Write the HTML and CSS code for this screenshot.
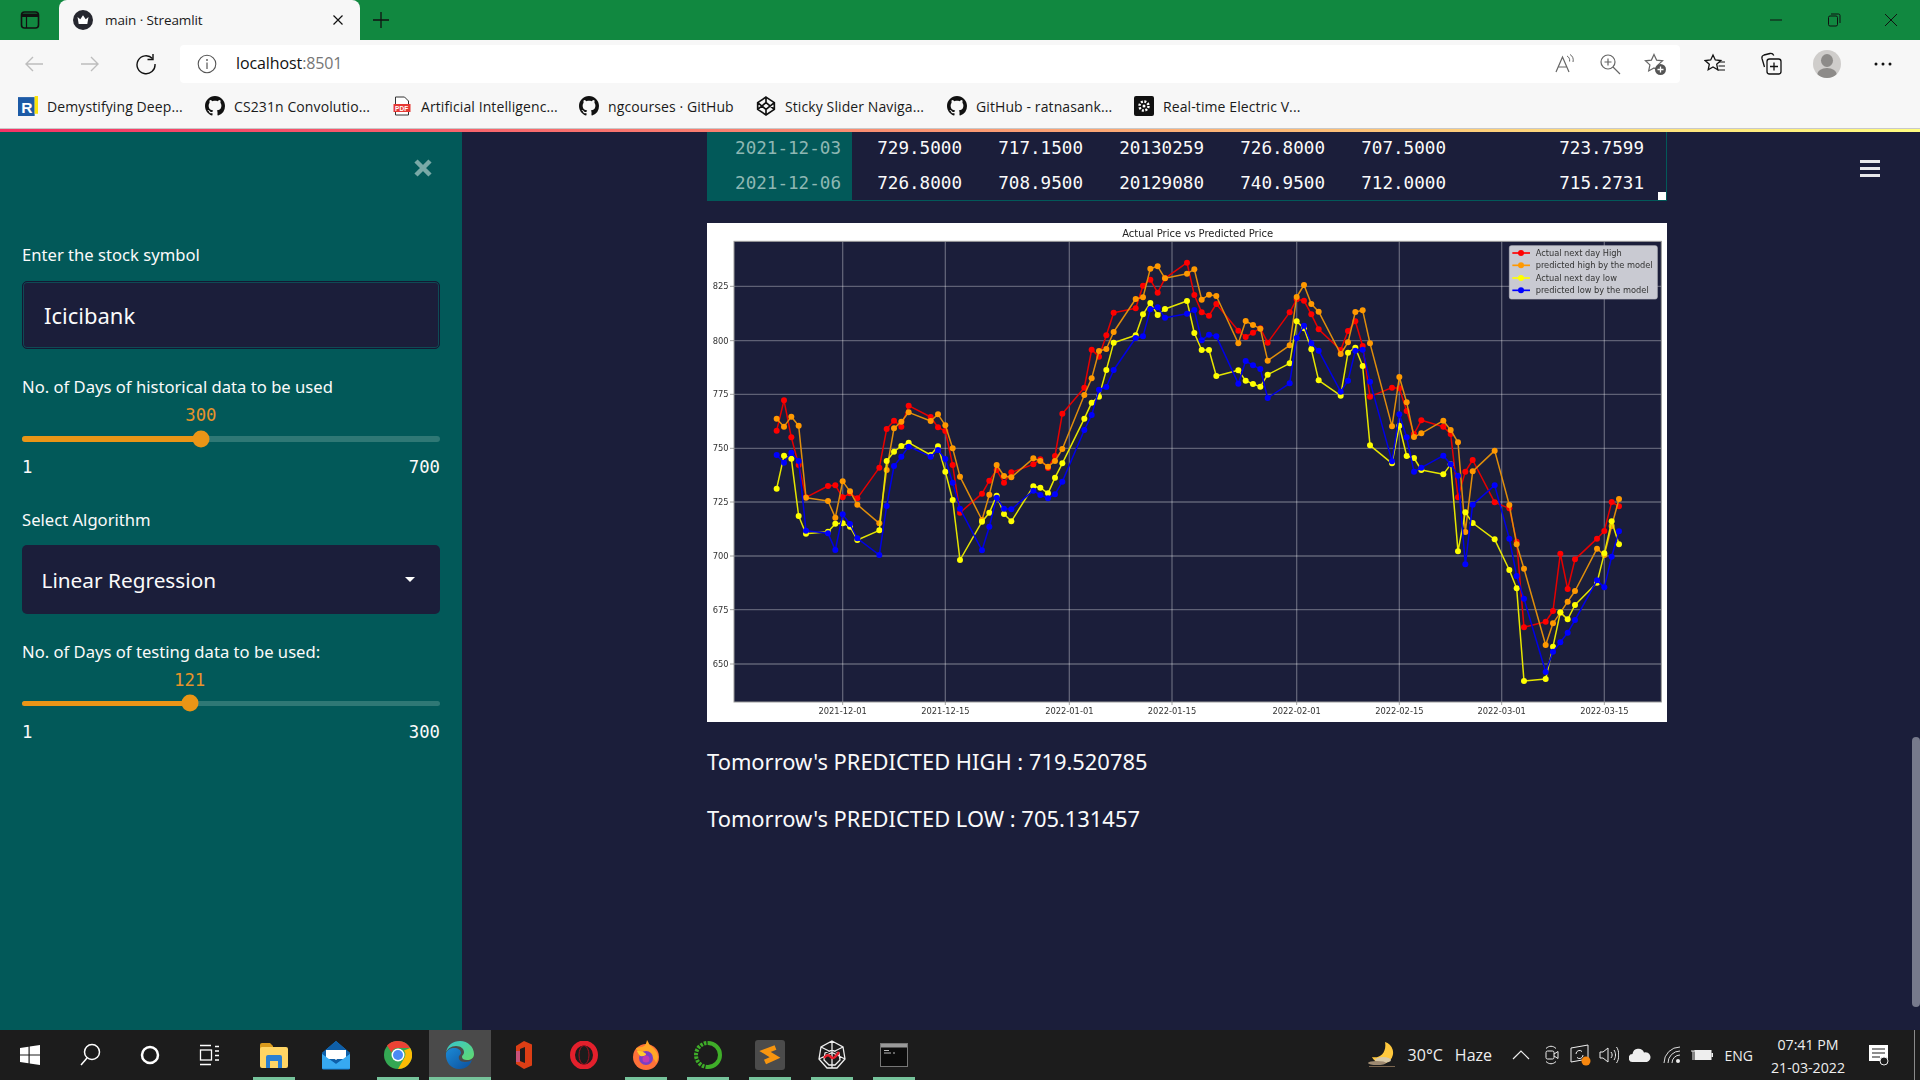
FILE: index.html
```html
<!DOCTYPE html>
<html lang="en">
<head>
<meta charset="utf-8">
<title>main · Streamlit</title>
<link rel="stylesheet" href="styles.css">
</head>
<body>
<svg class="defs" width="0" height="0" aria-hidden="true">
  <symbol id="gh" viewBox="0 0 16 16"><path fill="#111" d="M8 0C3.58 0 0 3.58 0 8c0 3.54 2.29 6.53 5.47 7.59.4.07.55-.17.55-.38 0-.19-.01-.82-.01-1.49-2.01.37-2.53-.49-2.69-.94-.09-.23-.48-.94-.82-1.13-.28-.15-.68-.52-.01-.53.63-.01 1.08.58 1.23.82.72 1.21 1.87.87 2.33.66.07-.52.28-.87.51-1.07-1.78-.2-3.64-.89-3.64-3.95 0-.87.31-1.59.82-2.15-.08-.2-.36-1.02.08-2.12 0 0 .67-.21 2.2.82.64-.18 1.32-.27 2-.27.68 0 1.36.09 2 .27 1.53-1.04 2.2-.82 2.2-.82.44 1.1.16 1.92.08 2.12.51.56.82 1.27.82 2.15 0 3.07-1.87 3.75-3.65 3.95.29.25.54.73.54 1.48 0 1.07-.01 1.93-.01 2.2 0 .21.15.46.55.38A8.013 8.013 0 0016 8c0-4.42-3.58-8-8-8z"/></symbol>
</svg>
<div class="window">
  <header class="titlebar">
    <div class="tabstrip-btn">
      <svg width="20" height="20" viewBox="0 0 20 20"><rect x="1.5" y="2" width="17" height="16" rx="3" fill="none" stroke="#111" stroke-width="1.6"/><path d="M2 3.5h16V7H2z" fill="#111"/><path d="M6.5 7v11" stroke="#111" stroke-width="1.2"/></svg>
    </div>
    <div class="tab">
      <svg class="favicon" width="20" height="20" viewBox="0 0 20 20"><circle cx="10" cy="10" r="10" fill="#26272f"/><path d="M4.5 7l2.8 2.2L10 5.2l2.7 4L15.5 7l-1.2 7H5.700z" fill="#fff"/></svg>
      <span class="tab-title">main · Streamlit</span>
      <svg class="tab-close" width="12" height="12" viewBox="0 0 12 12"><path d="M1.500 1.500l9 9M10.500 1.500l-9 9" stroke="#111" stroke-width="1.200"/></svg>
    </div>
    <div class="newtab"><svg width="18" height="18" viewBox="0 0 18 18"><path d="M9 1v16M1 9h16" stroke="#111" stroke-width="1.300"/></svg></div>
    <div class="winctrls">
      <div class="winctrl"><svg width="14" height="14" viewBox="0 0 14 14"><path d="M1 7h12" stroke="#111" stroke-width="1"/></svg></div>
      <div class="winctrl"><svg width="14" height="14" viewBox="0 0 14 14"><rect x="1.500" y="3" width="9" height="10" rx="1.500" fill="none" stroke="#111"/><path d="M4 1h7.500A1.500 1.500 0 0 1 13 2.500V10" fill="none" stroke="#111"/></svg></div>
      <div class="winctrl"><svg width="14" height="14" viewBox="0 0 14 14"><path d="M1 1l12 12M13 1L1 13" stroke="#111" stroke-width="1"/></svg></div>
    </div>
  </header>

  <div class="toolbar">
    <div class="tool"><svg width="22" height="22" viewBox="0 0 22 22"><path d="M20 11H3M10 4l-7 7 7 7" fill="none" stroke="#bdbdbd" stroke-width="1.400"/></svg></div>
    <div class="tool"><svg width="22" height="22" viewBox="0 0 22 22"><path d="M2 11h17M12 4l7 7-7 7" fill="none" stroke="#bdbdbd" stroke-width="1.400"/></svg></div>
    <div class="tool"><svg width="22" height="22" viewBox="0 0 22 22"><path d="M17.500 5.500A9 9 0 1 0 20 11" fill="none" stroke="#111" stroke-width="1.400"/><path d="M18 1v5.500h-5.500" fill="none" stroke="#111" stroke-width="1.400"/></svg></div>
    <div class="address">
      <svg class="info" width="20" height="20" viewBox="0 0 20 20"><circle cx="10" cy="10" r="8.800" fill="none" stroke="#555" stroke-width="1.100"/><path d="M10 8.500V15" stroke="#555" stroke-width="1.200"/><circle cx="10" cy="6" r=".9" fill="#555"/></svg>
      <span class="url">localhost<span class="port">:8501</span></span>
      <div class="addr-icons">
        <svg width="22" height="22" viewBox="0 0 22 22"><path d="M2 19L8.500 4 15 19M4.500 14h8" fill="none" stroke="#666" stroke-width="1.200"/><path d="M13 3c2 1 3 3 2.600 5.500M16 1.500c2.800 1.500 3.800 4.500 3 7.500" fill="none" stroke="#666" stroke-width="1"/></svg>
        <svg width="22" height="22" viewBox="0 0 22 22"><circle cx="9" cy="9" r="7" fill="none" stroke="#666" stroke-width="1.200"/><path d="M14 14l7 7M9 5.500v7M5.500 9h7" fill="none" stroke="#666" stroke-width="1.200"/></svg>
        <svg width="22" height="22" viewBox="0 0 22 22"><path d="M10 1.500l2.600 5.600 6 .7-4.500 4.100 1.200 6-5.300-3-5.300 3 1.200-6L1.400 7.800l6-.7z" fill="none" stroke="#666" stroke-width="1.200"/><circle cx="16.500" cy="16.500" r="5.500" fill="#555"/><path d="M16.500 13.500v6M13.500 16.500h6" stroke="#fff" stroke-width="1.300"/></svg>
      </div>
    </div>
    <div class="tool tool-first"><svg width="22" height="22" viewBox="0 0 22 22"><path d="M9 2l2.300 5 5.500.6-4.100 3.700 1.100 5.400L9 14l-4.800 2.700 1.100-5.400L1.200 7.600 6.700 7z" fill="none" stroke="#111" stroke-width="1.300"/><path d="M15 9h6M14.500 13h6.500M13.500 17H21" stroke="#111" stroke-width="1.200"/></svg></div>
    <div class="tool"><svg width="22" height="24" viewBox="0 0 22 24"><rect x="7" y="7" width="14" height="15" rx="2.500" fill="none" stroke="#111" stroke-width="1.300"/><path d="M14 10.500v8M10 14.500h8" stroke="#111" stroke-width="1.300"/><path d="M4.500 15L2 6.500A3 3 0 0 1 4 3l6-1.500c1.800-.4 3 .3 3.800 2" fill="none" stroke="#111" stroke-width="1.300"/></svg></div>
    <div class="tool"><svg width="28" height="28" viewBox="0 0 28 28"><defs><clipPath id="pc"><circle cx="14" cy="14" r="14"/></clipPath></defs><circle cx="14" cy="14" r="14" fill="#cfcdcb"/><g clip-path="url(#pc)" fill="#8d8b89"><ellipse cx="14" cy="10.500" rx="6" ry="6.500"/><ellipse cx="14" cy="25" rx="10" ry="7"/></g></svg></div>
    <div class="tool"><svg width="18" height="4" viewBox="0 0 18 4"><circle cx="2" cy="2" r="1.500" fill="#111"/><circle cx="9" cy="2" r="1.500" fill="#111"/><circle cx="16" cy="2" r="1.500" fill="#111"/></svg></div>
  </div>

  <nav class="bookmarks">
    <div class="bm">
      <svg width="20" height="20" viewBox="0 0 18 18"><rect y="1" width="15" height="17" fill="#1c5aa6"/><rect x="15" width="3" height="16" fill="#fbe30a"/><text x="3" y="15" class="bm-r">R</text></svg>
      <span>Demystifying Deep...</span>
    </div>
    <div class="bm"><svg width="20" height="20"><use href="#gh"/></svg><span>CS231n Convolutio...</span></div>
    <div class="bm">
      <svg width="20" height="20" viewBox="0 0 20 20"><path d="M3.500 1h9l4 4v14h-13z" fill="#fff" stroke="#333"/><rect x="1.500" y="8" width="17" height="8" fill="#e53935"/><text x="3" y="14.500" class="bm-pdf">PDF</text></svg>
      <span>Artificial Intelligenc...</span>
    </div>
    <div class="bm bm-short"><svg width="20" height="20"><use href="#gh"/></svg><span>ngcourses · GitHub</span></div>
    <div class="bm bm-wide">
      <svg width="20" height="20" viewBox="0 0 18 18"><path d="M9 1l7.500 5v6L9 17l-7.500-5V6zM9 1v5M9 12v5M1.500 6L9 12l7.500-6M1.500 12L9 6l7.500 6" fill="none" stroke="#111" stroke-width="1.500"/></svg>
      <span>Sticky Slider Naviga...</span>
    </div>
    <div class="bm"><svg width="20" height="20"><use href="#gh"/></svg><span>GitHub - ratnasank...</span></div>
    <div class="bm">
      <svg width="20" height="20" viewBox="0 0 20 20"><rect width="20" height="20" rx="2" fill="#111"/><circle cx="10" cy="10" r="4.500" fill="none" stroke="#fff" stroke-width="2.500" stroke-dasharray="2 1.500"/><circle cx="10" cy="10" r="1.500" fill="#fff"/></svg>
      <span>Real-time Electric V...</span>
    </div>
  </nav>

  <div class="app">
    <div class="decoration"></div>
    <div class="app-body">
      <aside class="sidebar">
        <div class="close-row">
          <svg width="18" height="18" viewBox="0 0 18 18"><path d="M2 2l14 14M16 2L2 16" stroke="#7aa9a7" stroke-width="4.500"/></svg>
        </div>
        <div class="label">Enter the stock symbol</div>
        <div class="text-input">Icicibank</div>
        <div class="label label-next">No. of Days of historical data to be used</div>
        <div class="slider" style="--p:42.8%">
          <div class="slider-value">300</div>
          <div class="track-wrap">
            <div class="track"><div class="fill"></div></div>
            <div class="thumb"></div>
          </div>
          <div class="ticks"><span>1</span><span>700</span></div>
        </div>
        <div class="label label-select">Select Algorithm</div>
        <div class="select"><span>Linear Regression</span><i class="caret"></i></div>
        <div class="label label-next">No. of Days of testing data to be used:</div>
        <div class="slider slider-b" style="--p:40.1%">
          <div class="slider-value">121</div>
          <div class="track-wrap">
            <div class="track"><div class="fill"></div></div>
            <div class="thumb"></div>
          </div>
          <div class="ticks"><span>1</span><span>300</span></div>
        </div>
      </aside>

      <main class="main">
        <div class="hamburger"><i></i><i></i><i></i></div>
        <div class="scrollbar"></div>
        <section class="content">
          <div class="dataframe">
            <div class="df-grid">
              <div class="df-index">2021-12-03</div><div>729.5000</div><div>717.1500</div><div>20130259</div><div>726.8000</div><div>707.5000</div><div>723.7599</div>
              <div class="df-index">2021-12-06</div><div>726.8000</div><div>708.9500</div><div>20129080</div><div>740.9500</div><div>712.0000</div><div>715.2731</div>
            </div>
            <div class="df-corner"></div>
          </div>

          <svg class="chart" width="960" height="499" viewBox="21 279 2880 1497">
            <defs>
              <marker id="mr" viewBox="-10 -10 20 20" markerWidth="20" markerHeight="20" markerUnits="userSpaceOnUse"><circle r="9" fill="#ff0000"/></marker>
              <marker id="mo" viewBox="-10 -10 20 20" markerWidth="20" markerHeight="20" markerUnits="userSpaceOnUse"><circle r="9" fill="#ff9900"/></marker>
              <marker id="my" viewBox="-10 -10 20 20" markerWidth="20" markerHeight="20" markerUnits="userSpaceOnUse"><circle r="9" fill="#ffff00"/></marker>
              <marker id="mb" viewBox="-10 -10 20 20" markerWidth="20" markerHeight="20" markerUnits="userSpaceOnUse"><circle r="9" fill="#0000ff"/></marker>
            </defs>
            <rect x="21" y="279" width="2880" height="1497" fill="#fff"/>
            <rect x="102" y="334" width="2782" height="1382" fill="#1b1e3a"/>
            <g class="grid">
              <path d="M428 334V1716M736 334V1716M1108 334V1716M1416 334V1716M1790 334V1716M2098 334V1716M2405 334V1716M2713 334V1716"/>
              <path d="M102 469H2884M102 632H2884M102 793H2884M102 955H2884M102 1116H2884M102 1278H2884M102 1439H2884M102 1602H2884"/>
            </g>
            <rect class="spine" x="102" y="334" width="2782" height="1382"/>
            <path class="tickmarks" d="M90 469h12M90 632h12M90 793h12M90 955h12M90 1116h12M90 1278h12M90 1439h12M90 1602h12M428 1716v9M736 1716v9M1108 1716v9M1416 1716v9M1790 1716v9M2098 1716v9M2405 1716v9M2713 1716v9"/>
            <polyline class="line" stroke="#e60000" marker-start="url(#mr)" marker-mid="url(#mr)" marker-end="url(#mr)" points="230,902 252,811 274,922 296,1005 318,1102 384,1068 406,1066 428,1102 450,1090 472,1105 538,1013 560,897 582,872 604,890 626,827 692,861 714,892 736,903 758,1005 780,1148 846,1091 868,1052 890,1020 912,1058 934,1027 1000,1003 1021,988 1044,1014 1065,978 1087,851 1153,773 1175,659 1197,680 1219,616 1241,548 1307,535 1329,467 1351,449 1373,488 1395,445 1461,398 1483,495 1505,547 1527,557 1549,522 1615,602 1637,621 1659,608 1681,595 1703,638 1769,547 1790,508 1812,512 1834,553 1856,598 1922,660 1944,603 1966,574 1988,648 2010,800 2076,773 2098,775 2120,843 2142,912 2164,871 2230,890 2252,912 2274,1102 2296,1025 2318,990 2384,1117 2428,1135 2450,1235 2472,1492 2537,1475 2559,1443 2581,1271 2603,1377 2625,1288 2691,1226 2713,1203 2735,1116 2757,1129"/>
            <polyline class="line" stroke="#e08e0b" marker-start="url(#mo)" marker-mid="url(#mo)" marker-end="url(#mo)" points="230,866 252,890 274,860 296,887 318,1103 384,1113 406,1163 428,1054 450,1084 472,1124 538,1180 560,1020 582,895 604,875 626,847 692,873 714,853 736,886 758,955 780,1040 846,1170 868,1094 890,1005 912,1038 934,1042 1000,985 1021,993 1044,1010 1065,993 1087,957 1153,795 1175,745 1197,663 1219,657 1241,606 1307,507 1329,502 1351,416 1373,409 1395,445 1461,431 1483,418 1505,509 1527,494 1549,498 1615,640 1637,573 1659,585 1681,596 1703,692 1769,646 1790,501 1812,465 1834,522 1856,545 1922,672 1944,637 1966,546 1988,541 2010,640 2076,889 2098,741 2120,817 2142,921 2164,910 2230,872 2252,900 2274,937 2296,1206 2318,1024 2384,962 2428,1125 2450,1243 2472,1316 2537,1545 2559,1480 2581,1448 2603,1415 2625,1383 2691,1256 2713,1275 2735,1188 2757,1107"/>
            <polyline class="line" stroke="#e6e600" marker-start="url(#my)" marker-mid="url(#my)" marker-end="url(#my)" points="230,1076 252,977 274,986 296,1158 318,1211 384,1205 406,1181 428,1180 450,1190 472,1230 538,1201 560,993 582,965 604,948 626,938 692,975 714,949 736,1025 758,1110 780,1290 846,1175 868,1148 890,1097 912,1152 934,1174 1000,1069 1021,1073 1044,1090 1065,1043 1087,1000 1153,866 1175,818 1197,800 1219,720 1241,638 1307,616 1329,553 1351,519 1373,555 1395,537 1461,513 1483,609 1505,660 1527,660 1549,738 1615,721 1637,752 1659,762 1681,770 1703,734 1769,700 1790,574 1812,595 1834,658 1856,751 1922,797 1944,668 1966,653 1988,708 2010,946 2076,1000 2098,887 2120,978 2142,984 2164,1020 2230,1033 2252,1003 2274,1264 2296,1147 2318,1179 2384,1228 2428,1320 2450,1375 2472,1653 2537,1647 2559,1550 2581,1447 2603,1468 2625,1425 2691,1358 2713,1270 2735,1174 2757,1243"/>
            <polyline class="line" stroke="#0000e6" marker-start="url(#mb)" marker-mid="url(#mb)" marker-end="url(#mb)" points="230,975 252,998 274,968 296,993 318,1202 384,1210 406,1260 428,1153 450,1182 472,1225 538,1275 560,1128 582,1008 604,980 626,950 692,980 714,960 736,987 758,1058 780,1136 846,1261 868,1190 890,1103 912,1136 934,1138 1000,1082 1021,1095 1044,1105 1065,1093 1087,1055 1153,900 1175,855 1197,779 1219,771 1241,720 1307,624 1329,619 1351,538 1373,532 1395,563 1461,551 1483,540 1505,631 1527,614 1549,619 1615,761 1637,693 1659,706 1681,717 1703,804 1769,760 1790,624 1812,587 1834,640 1856,662 1922,785 1944,752 1966,662 1988,659 2010,755 2076,994 2098,853 2120,922 2142,1025 2164,1013 2230,977 2252,1003 2274,1037 2296,1303 2318,1124 2384,1066 2428,1226 2450,1338 2472,1406 2537,1626 2559,1565 2581,1537 2603,1508 2625,1470 2691,1351 2713,1372 2735,1280 2757,1204"/>
            <text class="title" x="1493" y="320" text-anchor="middle">Actual Price vs Predicted Price</text>
            <g class="ytick" text-anchor="end">
              <text x="86" y="478">825</text><text x="86" y="641">800</text><text x="86" y="802">775</text><text x="86" y="964">750</text><text x="86" y="1125">725</text><text x="86" y="1287">700</text><text x="86" y="1448">675</text><text x="86" y="1611">650</text>
            </g>
            <g class="ytick" text-anchor="middle">
              <text x="428" y="1752">2021-12-01</text><text x="736" y="1752">2021-12-15</text><text x="1108" y="1752">2022-01-01</text><text x="1416" y="1752">2022-01-15</text><text x="1790" y="1752">2022-02-01</text><text x="2098" y="1752">2022-02-15</text><text x="2405" y="1752">2022-03-01</text><text x="2713" y="1752">2022-03-15</text>
            </g>
            <rect class="legend" x="2428" y="347" width="444" height="160" rx="6"/>
            <path class="leg-line" stroke="#f00" d="M2437 369h53"/><circle cx="2463" cy="369" r="9" fill="#f00"/>
            <path class="leg-line" stroke="#f90" d="M2437 406h53"/><circle cx="2463" cy="406" r="9" fill="#f90"/>
            <path class="leg-line" stroke="#ff0" d="M2437 444h53"/><circle cx="2463" cy="444" r="9" fill="#ff0"/>
            <path class="leg-line" stroke="#00f" d="M2437 481h53"/><circle cx="2463" cy="481" r="9" fill="#00f"/>
            <g class="legtext">
              <text x="2507" y="377">Actual next day High</text>
              <text x="2507" y="415">predicted high by the model</text>
              <text x="2507" y="452">Actual next day low</text>
              <text x="2507" y="490">predicted low by the model</text>
            </g>
          </svg>

          <p class="prediction prediction-first">Tomorrow's PREDICTED HIGH : 719.520785</p>
          <p class="prediction">Tomorrow's PREDICTED LOW : 705.131457</p>
        </section>
      </main>
    </div>
  </div>

  <footer class="taskbar">
    <div class="tb-left">
      <div class="tb tb-sys"><svg width="22" height="22" viewBox="0 0 22 22"><path d="M1 4l8.500-1.300V10.400H1zM10.700 2.500L21 1v9.400H10.700zM1 11.600h8.500V19.300L1 18zM10.700 11.600H21V21l-10.300-1.500z" fill="#fff"/></svg></div>
      <div class="tb tb-sys"><svg width="22" height="24" viewBox="0 0 22 24"><circle cx="13" cy="9" r="7.500" fill="none" stroke="#fff" stroke-width="1.500"/><path d="M8 15L2 22" stroke="#fff" stroke-width="1.500"/></svg></div>
      <div class="tb tb-sys"><svg width="22" height="22" viewBox="0 0 22 22"><circle cx="11" cy="11" r="8" fill="none" stroke="#fff" stroke-width="2.500"/></svg></div>
      <div class="tb tb-sys"><svg width="22" height="22" viewBox="0 0 22 22"><path d="M1 1.500h11M1 20.500h11M16 2.500h4M16 7h4M16 11.500h4M16 16h4" stroke="#fff" stroke-width="1.300"/><rect x="1.500" y="6" width="11" height="10" fill="none" stroke="#fff" stroke-width="1.300"/></svg></div>
      <div class="tb tb-app tb-first tb-on"><svg width="30" height="28" viewBox="0 0 30 28"><path d="M1 4a2 2 0 0 1 2-2h8l3 3v4H1z" fill="#d99a1c"/><rect x="1" y="6" width="28" height="21" rx="2" fill="#ffd564"/><path d="M7 27V16a2 2 0 0 1 2-2h12a2 2 0 0 1 2 2v11h-4v-7h-8v7z" fill="#2a7fd2"/></svg></div>
      <div class="tb tb-app"><svg width="30" height="30" viewBox="0 0 30 30"><path d="M15 1L29 13v15a1.500 1.500 0 0 1-1.500 1.500h-25A1.500 1.500 0 0 1 1 28V13z" fill="#1888df"/><path d="M15 1L29 13v1L15 24 1 14v-1z" fill="#0f5fa8"/><rect x="5" y="10" width="20" height="9" fill="#fff"/><path d="M5 12l10 8 10-8v-2H5z" fill="#fff"/><path d="M1 14l14 10 14-10v14.500H1z" fill="#37a9f1"/></svg></div>
      <div class="tb tb-app tb-on"><svg width="28" height="28" viewBox="0 0 28 28"><circle cx="14" cy="14" r="14" fill="#34a853"/><path d="M14 0a14 14 0 0 1 12.200 7H14a7 7 0 0 0-6.500 4.400L3 4.500A14 14 0 0 1 14 0z" fill="#ea4335"/><path d="M26.200 7A14 14 0 0 1 14 28l6-10.500A7 7 0 0 0 20 9.500z" fill="#fbbc04"/><circle cx="14" cy="14" r="6.500" fill="#fff"/><circle cx="14" cy="14" r="5" fill="#4a8af4"/></svg></div>
      <div class="tb tb-app tb-active"><svg width="30" height="30" viewBox="0 0 30 30"><defs><linearGradient id="eg1" x1="0" y1="0" x2="1" y2="1"><stop offset="0" stop-color="#37c6d0"/><stop offset="1" stop-color="#62d96b"/></linearGradient><linearGradient id="eg2" x1="0" y1="0" x2="1" y2="1"><stop offset="0" stop-color="#1b8ad6"/><stop offset="1" stop-color="#0c4f9c"/></linearGradient></defs><path d="M1 13C2 5 8 1 15 1c8 0 14 6 14 13 0 4-3 6-7 6-3 0-5-1-5-3 0-2 2-2 2-5 0-3-3-6-8-6-5 0-9 3-10 7z" fill="url(#eg1)"/><path d="M1 13c2-4 5-5 8-5 4 0 7 2 7 5 0 1-1 2-2 3-1 3 1 6 6 6 3 0 5-1 7-2-2 6-7 9-13 9C6 29 0 22 1 13z" fill="url(#eg2)"/></svg></div>
      <div class="tb tb-app"><svg width="24" height="28" viewBox="0 0 24 28"><path d="M6 5l8-5 8 3.500v21L14 28l-8-5z" fill="#dc3e15"/><path d="M10 8l5-2v16l-5-2z" fill="#1c1c1c"/><path d="M6 10h4v11H6z" fill="#c9527a"/></svg></div>
      <div class="tb tb-app"><svg width="28" height="28" viewBox="0 0 28 28"><ellipse cx="14" cy="14" rx="11.500" ry="12" fill="none" stroke="#e3202c" stroke-width="5"/><ellipse cx="14" cy="14" rx="5" ry="9.500" fill="none" stroke="#a50f1e" stroke-width="1"/></svg></div>
      <div class="tb tb-app tb-on"><svg width="28" height="30" viewBox="0 0 28 30"><circle cx="14" cy="17" r="13" fill="#ff7139"/><path d="M4 8c2 0 3-1 5-1 3 0 5-2 6-7 2 3 2 5 4 6 4 3 7 7 7 11 0 2-1 4-2 6-2-6-8-9-13-8-2 0-4 0-7-7z" fill="#ffa726"/><circle cx="14" cy="18" r="7" fill="#7a3fc4"/><path d="M5 11c2 0 5 0 8 2 2 1 1 3-2 3-3 1-4-1-6-5z" fill="#ffcb2d"/><circle cx="14" cy="19" r="3.500" fill="#c13bb1"/></svg></div>
      <div class="tb tb-app tb-on"><svg width="28" height="28" viewBox="0 0 28 28"><path d="M14 2a12 12 0 0 1 0 24" fill="none" stroke="#3fae29" stroke-width="4"/><path d="M14 26A12 12 0 0 1 14 2" fill="none" stroke="#3fae29" stroke-width="4" stroke-dasharray="2.500 1.200"/></svg></div>
      <div class="tb tb-app tb-on"><svg width="30" height="30" viewBox="0 0 30 30"><rect width="30" height="30" rx="3" fill="#4b4b4b"/><path d="M20.500 7.500L10 11.500l10 6-10 4.500" fill="none" stroke="#f7950f" stroke-width="5"/></svg></div>
      <div class="tb tb-app tb-on"><svg width="28" height="30" viewBox="0 0 28 30"><path d="M14 1L25 7l2 12-8 9H9l-8-9 2-12zM14 1v27M3 7l24 12M25 7L1 19M7 13l7-3 7 3 1 7-5 5h-6l-5-5z" fill="none" stroke="#eee" stroke-width="1.300"/><path d="M6 18c3-4 5-3 7-1s4 1 8-5" fill="none" stroke="#e8202c" stroke-width="2.500"/></svg></div>
      <div class="tb tb-app tb-on"><svg width="28" height="24" viewBox="0 0 28 24"><rect x=".5" y=".5" width="27" height="23" fill="#0c0c0c" stroke="#777"/><rect x="1" y="1" width="26" height="3.500" fill="#9a9a9a"/><path d="M4 7.500h5M4 10h7M13 10h2" stroke="#bbb" stroke-width="1"/></svg></div>
    </div>
    <div class="tray">
      <svg class="tray-moon" width="30" height="28" viewBox="0 0 30 28"><path d="M18 1a11 11 0 1 1-13 15c8 2 15-5 13-15z" fill="#ffc83d"/><ellipse cx="16" cy="19" rx="8" ry="3" fill="#d8c9a8"/><ellipse cx="10" cy="22" rx="9" ry="2" fill="#9f8b72"/><path d="M2 25.500h26" stroke="#7a6650" stroke-width="1"/></svg>
      <span class="tray-temp">30°C</span>
      <span class="tray-haze">Haze</span>
      <svg class="tray-caret" width="18" height="10" viewBox="0 0 18 10"><path d="M1 9l8-8 8 8" fill="none" stroke="#eee" stroke-width="1.200"/></svg>
      <svg class="tray-video" width="16" height="20" viewBox="0 0 16 20"><rect x="2" y="6" width="8" height="8" rx="1.500" fill="none" stroke="#eee"/><path d="M10 9l4-2.500v7L10 11M2 3.500c3-3 7-3 10 0M2 16.500c3 3 7 3 10 0" fill="none" stroke="#eee"/></svg>
      <svg class="tray-app" width="22" height="22" viewBox="0 0 22 22"><path d="M1 4l17-3v14l-17 3z" fill="none" stroke="#eee"/><path d="M6 10a3.500 3.500 0 0 1 6-2.500M13 11a3.500 3.500 0 0 1-6 2.500" fill="none" stroke="#eee"/><circle cx="16" cy="17" r="4.500" fill="#f7870f"/></svg>
      <svg class="tray-speaker" width="20" height="20" viewBox="0 0 20 20"><path d="M1 7h3l5-4v14l-5-4H1zM12 7c1.500 2 1.500 4 0 6M15 5c2 3 2 7 0 10M17.500 2c3 4 3 12 0 16" fill="none" stroke="#eee"/></svg>
      <svg class="tray-cloud" width="22" height="14" viewBox="0 0 22 14"><path d="M4 14a4 4 0 0 1-.500-8A6 6 0 0 1 15 4.500a4.500 4.500 0 0 1 3 9.500z" fill="#eee"/></svg>
      <svg class="tray-wifi" width="18" height="18" viewBox="0 0 18 18"><path d="M1 17A16 16 0 0 1 17 1M5 17A12 12 0 0 1 17 5M9 17a8 8 0 0 1 8-8" fill="none" stroke="#ddd"/><circle cx="15" cy="15" r="2" fill="#eee"/></svg>
      <svg class="tray-battery" width="22" height="14" viewBox="0 0 22 14"><rect x="4" y="2.500" width="16" height="9" fill="#eee" stroke="#eee"/><rect x="20.500" y="5" width="1.500" height="4" fill="#eee"/><path d="M2 3v9M0 3h4" stroke="#eee"/></svg>
      <span class="tray-eng">ENG</span>
      <div class="clock"><span>07:41 PM</span><span>21-03-2022</span></div>
      <svg class="tray-notif" width="22" height="22" viewBox="0 0 22 22"><path d="M1 1h19v16H1z" fill="#fff"/><path d="M4 5h13M4 9h13M4 13h8" stroke="#1c1c1c" stroke-width="1.200"/><circle cx="16" cy="17" r="4" fill="#1c1c1c" stroke="#eee"/></svg>
      <i class="desktop-divider"></i>
    </div>
  </footer>
</div>
</body>
</html>
```

FILE: styles.css
```css
* { box-sizing: border-box; }
html, body { margin: 0; height: 100%; overflow: hidden; }
body { font-family: "Noto Sans", "Open Sans", sans-serif; background: #1b1e3a; }
.defs { position: absolute; }
.window { width: 1920px; height: 1080px; display: flex; flex-direction: column; }

/* browser chrome */
.titlebar { height: 40px; flex: none; display: flex; background: #118840; }
.tabstrip-btn { width: 59px; display: flex; align-items: center; justify-content: center; }
.tab { width: 301px; background: #f7f7f7; border-radius: 8px 8px 0 0; display: flex; align-items: center; padding: 0 16px 0 14px; }
.tab-title { margin-left: 12px; font: 13.5px "Open Sans", sans-serif; color: #1a1a1a; letter-spacing: -.1px; }
.tab-close { margin-left: auto; }
.newtab { width: 42px; display: flex; align-items: center; justify-content: center; }
.winctrls { margin-left: auto; display: flex; }
.winctrl { width: 57.6px; display: flex; align-items: center; justify-content: center; }

.toolbar { height: 48px; flex: none; background: #f7f7f7; display: flex; align-items: center; padding-left: 6px; }
.tool { width: 56px; height: 40px; display: flex; align-items: center; justify-content: center; }
.tool-first { margin-left: 7px; }
.address { width: 1500px; height: 38px; margin-left: 6px; background: #fff; border-radius: 4px; display: flex; align-items: center; padding: 0 6px 0 17px; }
.url { margin-left: 19px; font: 16px "Open Sans", sans-serif; color: #111; letter-spacing: -.1px; position: relative; top: -1px; }
.port { color: #767676; }
.addr-icons { margin-left: auto; display: flex; gap: 23px; padding-right: 8px; }

.bookmarks { height: 41px; flex: none; background: #f7f7f7; border-bottom: 1px solid #c9c9c9; display: flex; align-items: center; padding: 0 0 4px 18px; font: 14px "Open Sans", sans-serif; color: #1a1a1a; letter-spacing: .1px; }
.bm { width: 187px; display: flex; align-items: center; gap: 9px; white-space: nowrap; }
.bm-short { width: 177px; }
.bm-wide { width: 191px; }
.bm-r { font: 700 14px "Liberation Sans", sans-serif; fill: #fff; }
.bm-pdf { font: 700 6.500px "Liberation Sans", sans-serif; fill: #fff; }

/* streamlit app */
.app { flex: 1; min-height: 0; display: flex; flex-direction: column; background: #1b1e3a; }
.decoration { height: 3px; flex: none; background: linear-gradient(90deg, #f63366, #fffd80); }
.app-body { flex: 1; min-height: 0; display: flex; }

.sidebar { width: 462px; flex: none; background: #025959; padding: 0 22px; color: #fafafa; }
.close-row { height: 111px; padding: 27px 8px 0 0; display: flex; justify-content: flex-end; align-items: flex-start; }
.label { height: 24px; line-height: 24px; font-size: 16.640px; color: #fafafa; white-space: nowrap; }
.label-next { margin-top: 26px; }
.label-select { margin-top: 29px; }
.text-input { margin-top: 14px; height: 68px; background: #1b1e3a; border: 1px solid #141833; box-shadow: inset 0 0 0 1px #0f4a55; border-radius: 5px; padding-left: 21px; display: flex; align-items: center; font-size: 22px; }
.select { margin-top: 13px; height: 69px; background: #1b1e3a; border-radius: 5px; padding: 0 25px 0 19.500px; display: flex; align-items: center; justify-content: space-between; font-size: 20.800px; }
.caret { border: 5.500px solid transparent; border-top: 5.500px solid #fff; border-bottom: 0; }

.slider-value { margin: 4px 0 0 var(--p); width: max-content; transform: translateX(-50%); height: 24px; font: 17.300px/24px "DejaVu Sans Mono", monospace; color: #e8932a; }
.track-wrap { position: relative; height: 24px; display: flex; align-items: center; }
.track { width: 100%; height: 6px; border-radius: 3px; background: #2f7875; overflow: hidden; }
.fill { width: var(--p); height: 100%; background: #ea9516; }
.thumb { position: absolute; left: var(--p); top: 50%; width: 17px; height: 17px; border-radius: 50%; background: #ea9516; transform: translate(-50%, -50%); }
.ticks { margin-top: 4px; height: 24px; display: flex; justify-content: space-between; font: 17.300px/24px "DejaVu Sans Mono", monospace; color: #fafafa; }
.slider-b .track-wrap { height: 22px; }
.slider-b .track { height: 5px; }
.slider-b .ticks { margin-top: 6px; }

.main { flex: 1; position: relative; padding-left: 245px; color: #fafafa; }
.hamburger { position: absolute; top: 28px; left: 1398px; width: 20px; display: flex; flex-direction: column; gap: 4px; }
.hamburger i { height: 3px; background: #e8e8ea; }
.scrollbar { position: absolute; right: 0; top: 605px; width: 8px; height: 270px; border-radius: 4px; background: #777a8c; }
.content { width: 960px; }

.dataframe { position: relative; height: 69px; overflow: hidden; border: 1px solid #025959; border-top: 0; }
.df-grid { margin-top: -1px; display: grid; grid-template-columns: 144px repeat(5, 121px) 198px; grid-auto-rows: 35px; font: 17.600px/35px "DejaVu Sans Mono", monospace; text-align: right; color: #fafafa; }
.df-grid > div { padding-right: 11px; }
.df-grid > .df-index { background: #025959; color: #8eb7b3; }
.df-corner { position: absolute; right: 0; bottom: 0; width: 8px; height: 8px; background: #fff; }

.chart { display: block; margin-top: 22px; filter: blur(.45px); }
.grid path { fill: none; stroke: #fff; stroke-opacity: .3; stroke-width: 4; }
.spine { fill: none; stroke: #9c9c9c; stroke-width: 3; }
.tickmarks { stroke: #777; stroke-width: 2; fill: none; }
.line { fill: none; stroke-width: 4.500; stroke-linejoin: round; }
.chart text { font-family: "DejaVu Sans", sans-serif; }
.title { font-size: 30px; fill: #222; }
.ytick { font-size: 25px; fill: #333; }
.legend { fill: #c9cad2; stroke: #bcbcc4; stroke-width: 2; }
.leg-line { stroke-width: 5; fill: none; }
.legtext { font-size: 24.800px; fill: #333; }

.prediction { margin: 21px 0 0; height: 36px; line-height: 36px; font-size: 21.900px; color: #fafafa; white-space: nowrap; }
.prediction-first { margin-top: 22px; }

/* taskbar */
.taskbar { height: 50px; flex: none; background: #1c1c1c; display: flex; justify-content: space-between; color: #eee; }
.tb-left { display: flex; }
.tb { height: 50px; display: flex; align-items: center; justify-content: center; }
.tb-sys { width: 60px; }
.tb-app { width: 62px; position: relative; }
.tb-first { margin-left: 3px; }
.tb-on::after { content: ""; position: absolute; left: 10px; right: 10px; bottom: 0; height: 3px; background: #76c39b; }
.tb-active { background: #4a4a4a; border-bottom: 3px solid #76c39b; padding-top: 3px; }
.tray { display: flex; align-items: center; font: 15px "Open Sans", sans-serif; height: 100%; }
.tray-temp { margin-left: 11px; font-size: 16px; }
.tray-haze { margin-left: 12px; font-size: 16px; }
.tray-caret { margin-left: 20px; }
.tray-video { margin-left: 14px; }
.tray-app { margin-left: 10px; }
.tray-speaker { margin-left: 7px; }
.tray-cloud { margin-left: 10px; }
.tray-wifi { margin-left: 12px; }
.tray-battery { margin-left: 9.500px; }
.tray-eng { margin-left: 12px; font-size: 14px; }
.clock { margin-left: 10px; width: 90px; display: flex; flex-direction: column; align-items: center; font-size: 14.200px; line-height: 23px; padding-top: 2px; }
.tray-notif { margin-left: 15px; }
.desktop-divider { width: 1px; height: 100%; margin: 0 5px 0 24px; background: #8a8a8a; }
```
